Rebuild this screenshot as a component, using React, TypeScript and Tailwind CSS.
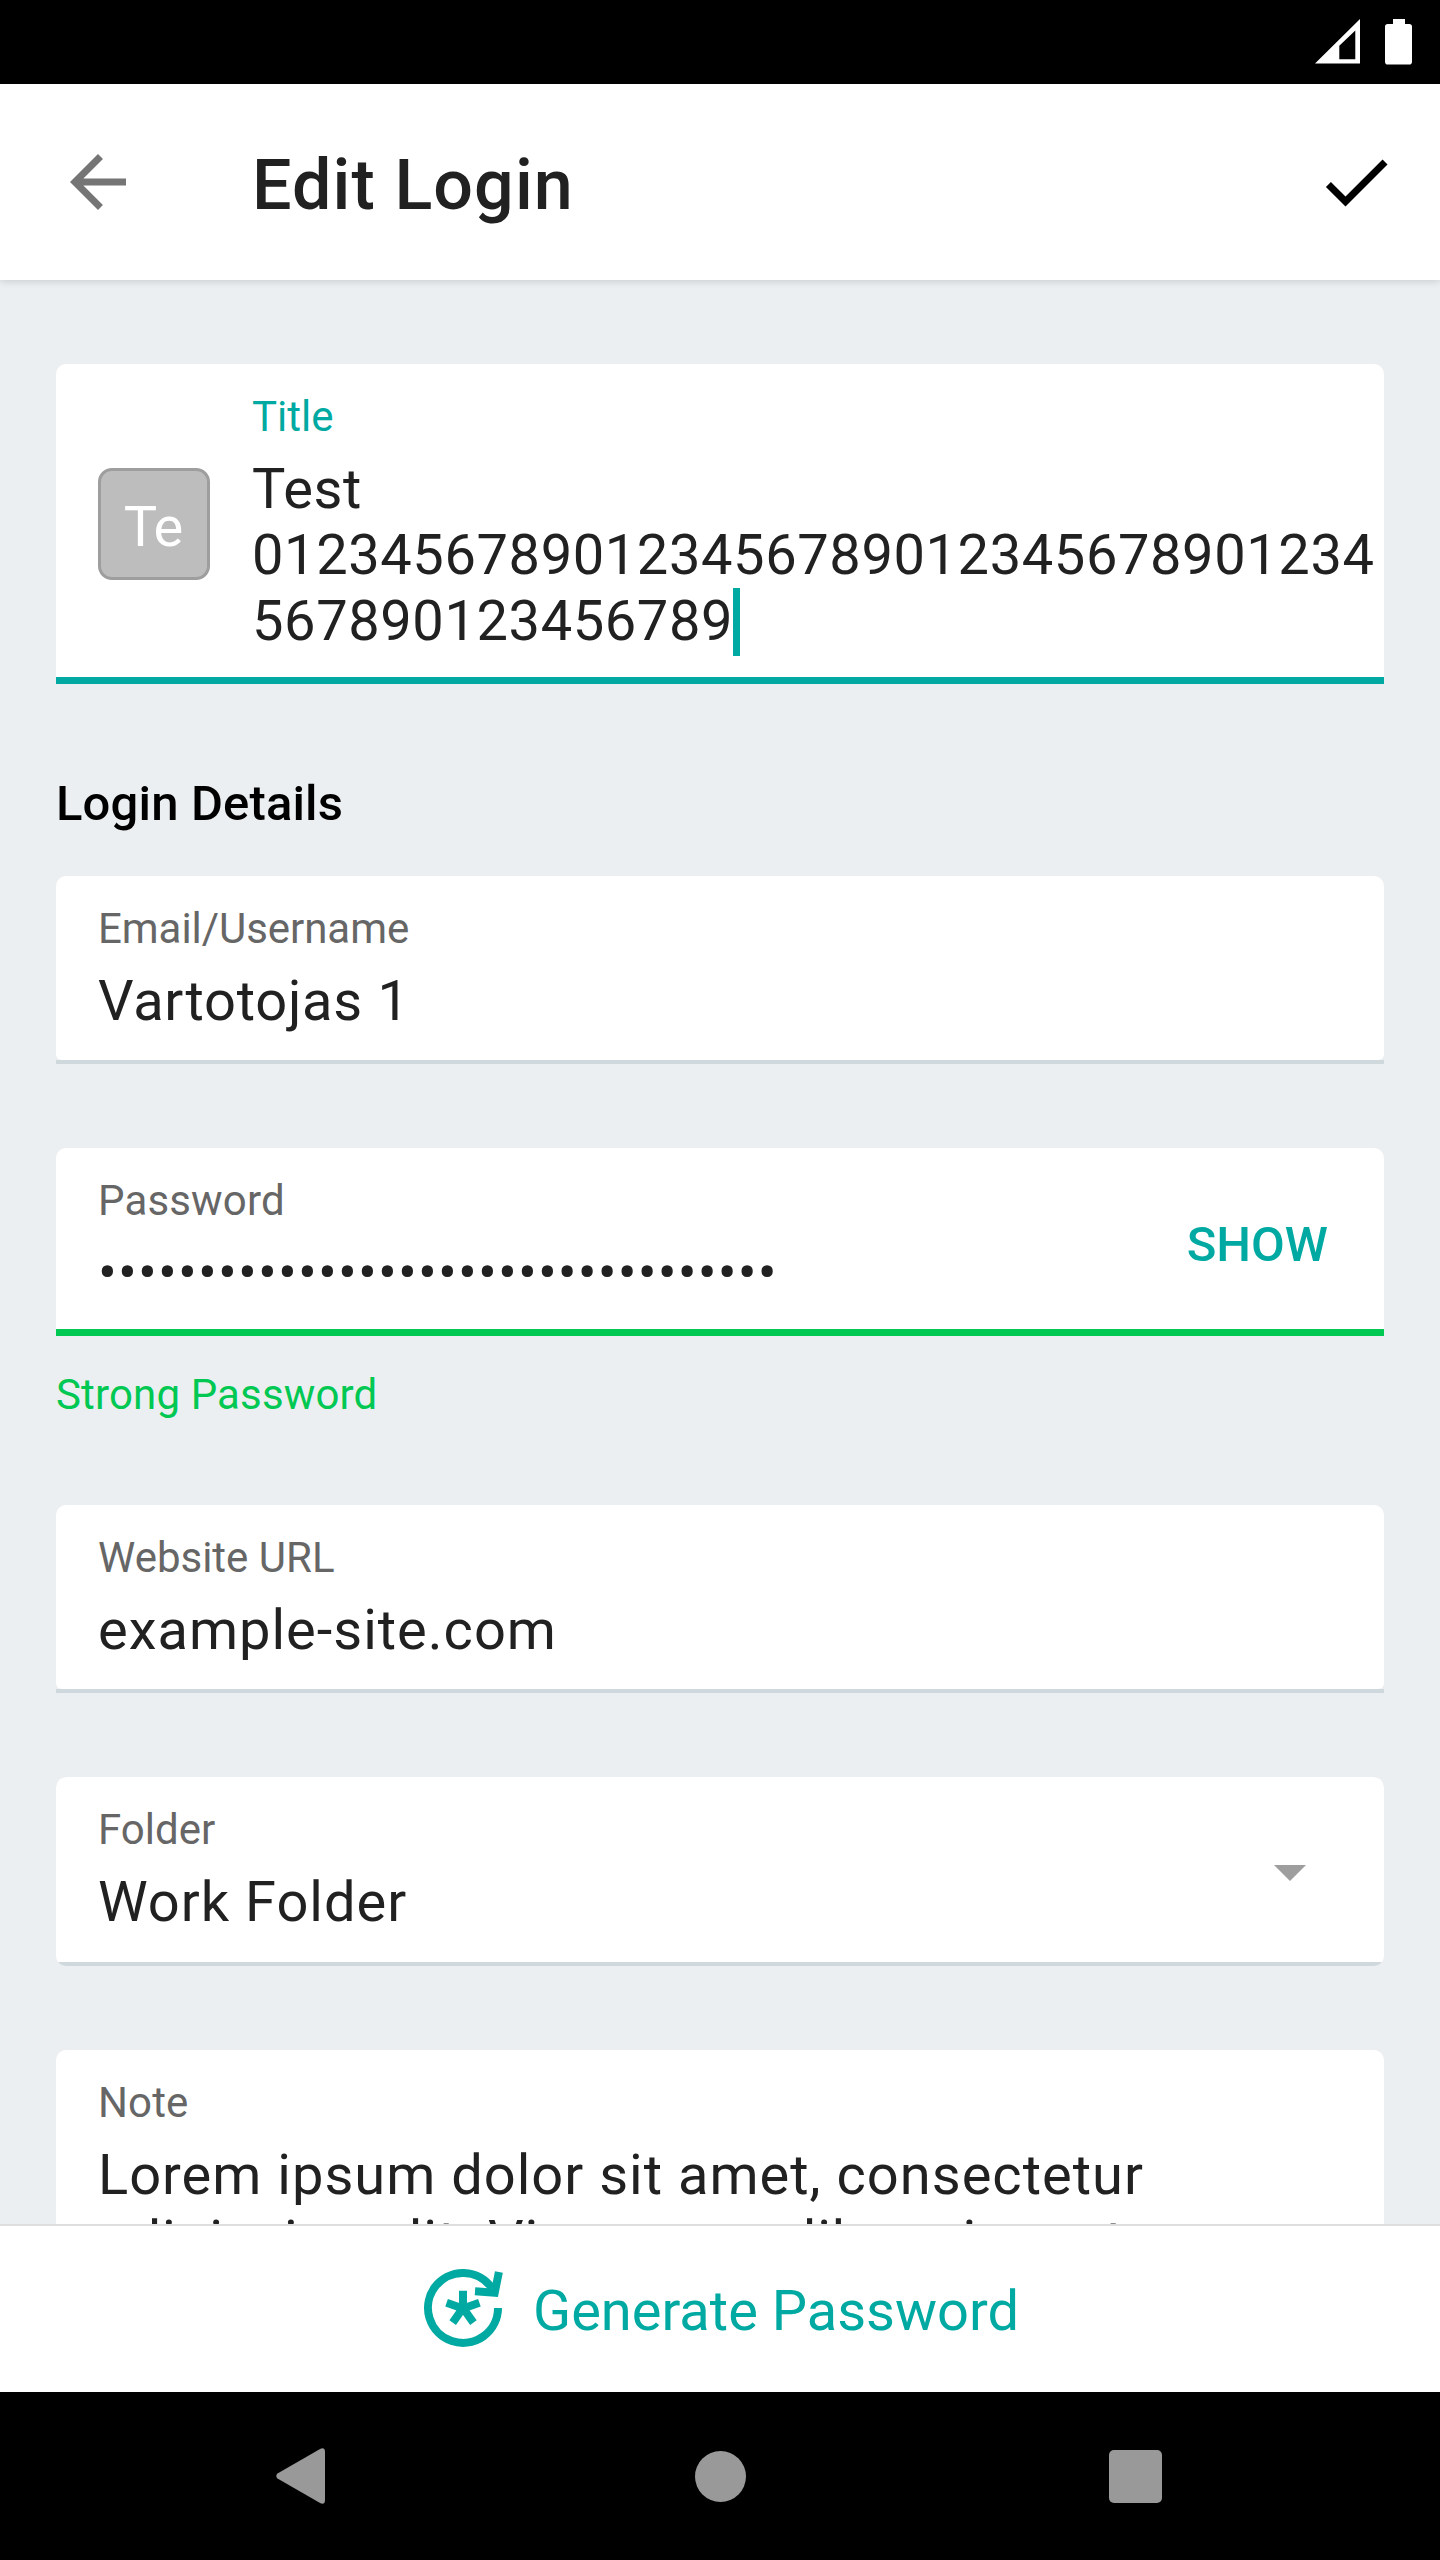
import type { ReactNode } from "react";

function StatusBar() {
  return (
    <div className="flex h-[84px] shrink-0 items-start justify-end gap-[25px] bg-black pt-[19px] pr-7">
      <svg width="45" height="45" viewBox="0 0 45 45" fill="#fff">
        <path fillRule="evenodd" d="M0 44.5 L45 0 V44.5 Z M24.3 40.3 H40.3 V11.5 L24.3 26.7 Z" />
      </svg>
      <svg width="27" height="46" viewBox="0 0 27 46" fill="#fff">
        <path d="M8 0 H20 V5 H24.2 Q27 5 27 7.8 V42.7 Q27 45.5 24.2 45.5 H2.8 Q0 45.5 0 42.7 V7.8 Q0 5 2.8 5 H8 Z" />
      </svg>
    </div>
  );
}

function Header() {
  return (
    <header className="z-10 flex h-[196px] shrink-0 items-center bg-white pr-[42px] pl-14 shadow-[0_1px_8px_rgba(0,0,0,0.16)]">
      <svg width="84" height="84" viewBox="0 0 24 24" fill="#757575">
        <path d="M20 11H7.83l5.59-5.59L12 4l-8 8 8 8 1.41-1.41L7.83 13H20v-2z" />
      </svg>
      <h1 className="ml-28 flex-1 pt-1.5 text-[70px] leading-[82px] font-medium tracking-[1.1px] text-[#212121]">
        Edit Login
      </h1>
      <svg width="84" height="84" viewBox="0 0 24 24" fill="#000">
        <path d="M9 16.17L4.83 12l-1.42 1.41L9 19 21 7l-1.41-1.41L9 16.17z" />
      </svg>
    </header>
  );
}

function Label({ className, children }: { className: string; children: ReactNode }) {
  return <div className={`text-[42px] leading-[49px] whitespace-nowrap ${className}`}>{children}</div>;
}

function Value({ className, children }: { className: string; children: ReactNode }) {
  return (
    <div className={`mt-[15px] text-[56px] leading-[66px] whitespace-nowrap text-[#212121] ${className}`}>
      {children}
    </div>
  );
}

/* White field with a full-width underline beneath it. */
function Field({
  height,
  line,
  bottom = "rounded-b-none",
  children,
}: {
  height: string;
  line: string;
  bottom?: string;
  children: ReactNode;
}) {
  return (
    <div className={`flex shrink-0 flex-col ${height}`}>
      <div className={`flex flex-1 rounded-t-[10px] bg-white pt-7 pl-[42px] ${bottom}`}>{children}</div>
      <div className={`shrink-0 ${line}`} />
    </div>
  );
}

function GenerateIcon() {
  return (
    <svg width="84" height="84" viewBox="0 0 84 84" fill="none" stroke="#00a9a1" strokeWidth="8">
      <path d="M77 41 A35 35 0 1 1 71 21.3" />
      <path d="M54 24.3 L73.7 25.8 L77.9 5" />
      <path d="M42 23.7 V42 M25.6 35.8 L42 41.5 L58.4 35.8 M31.7 55.6 L42 41 L52.4 55.6" />
    </svg>
  );
}

export default function App() {
  return (
    <div className="flex h-[2560px] w-[1440px] flex-col overflow-hidden bg-[#eceff1] font-[Roboto,sans-serif]">
      <StatusBar />
      <Header />

      <main className="flex min-h-0 flex-1 flex-col overflow-hidden px-14 pt-[84px]">
        <Field height="h-[320px]" line="h-[7px] bg-[#00a9a1]">
          <div className="mt-[76px] flex h-28 w-28 items-center justify-center rounded-[14px] border-[3px] border-[#9e9e9e] bg-[#bdbdbd] pt-1.5 pr-0.5 text-[56px] leading-[66px] tracking-[-1px] text-white">
            Te
          </div>
          <div className="ml-[42px]">
            <Label className="text-[#00a9a1]">Title</Label>
            <Value className="tracking-[0.6px]">
              <div>Test</div>
              <div>01234567890123456789012345678901234</div>
              <div className="flex">
                567890123456789
                <span className="h-[68px] w-[7px] bg-[#00a9a1]" />
              </div>
            </Value>
          </div>
        </Field>

        <h2 className="mt-[91px] mb-[43px] shrink-0 text-[49px] leading-[58px] font-medium tracking-[0.15px] text-black">
          Login Details
        </h2>

        <Field height="h-[188px]" line="h-1 bg-[#cfd8dc]" bottom="rounded-b-[6px]">
          <div>
            <Label className="tracking-[-0.05px] text-[#666666]">Email/Username</Label>
            <Value className="tracking-[0.75px]">Vartotojas 1</Value>
          </div>
        </Field>

        <div className="mt-[84px] shrink-0">
          <Field height="h-[188px]" line="h-[7px] bg-[#00c853]">
            <div className="flex-1">
              <Label className="tracking-[0.15px] text-[#666666]">Password</Label>
              <Value className="tracking-[1.1px]">{"•".repeat(34)}</Value>
            </div>
            <button className="mt-10 mr-14 h-[58px] text-[49px] leading-[58px] font-medium text-[#00a9a1]">
              SHOW
            </button>
          </Field>
        </div>
        <div className="mt-[34px] shrink-0 text-[42px] leading-[49px] tracking-[0.15px] text-[#00c853]">
          Strong Password
        </div>

        <div className="mt-[86px] shrink-0">
          <Field height="h-[188px]" line="h-1 bg-[#cfd8dc]" bottom="rounded-b-[6px]">
            <div>
              <Label className="text-[#666666]">Website URL</Label>
              <Value className="tracking-[1px]">example-site.com</Value>
            </div>
          </Field>
        </div>

        <div className="mt-[84px] shrink-0 overflow-hidden rounded-[10px]">
          <Field height="h-[189px]" line="h-1 bg-[#cfd8dc]">
            <div className="flex-1">
              <Label className="text-[#666666]">Folder</Label>
              <Value className="tracking-[1px]">Work Folder</Value>
            </div>
            <svg className="mt-[60px] mr-[78.5px]" width="32" height="16" viewBox="0 0 32 16" fill="#9e9e9e">
              <path d="M0 0 H32 L16 16 Z" />
            </svg>
          </Field>
        </div>

        <div className="mt-[84px] shrink-0">
          <Field height="h-[320px]" line="h-1 bg-[#cfd8dc]">
            <div>
              <Label className="tracking-[0.11px] text-[#666666]">Note</Label>
              <Value className="tracking-[1.01px]">
                Lorem ipsum dolor sit amet, consectetur
                <br />
                adipiscing elit. Vivamus eu libero in erat
              </Value>
            </div>
          </Field>
        </div>
      </main>

      <button className="flex h-[168px] shrink-0 items-center gap-7 border-t-2 border-[#dedede] bg-white pl-[421px]">
        <GenerateIcon />
        <span className="pt-1 text-[56px] leading-[66px] text-[#00a9a1]">Generate Password</span>
      </button>

      <nav className="flex h-[168px] shrink-0 items-center bg-black">
        <svg className="ml-[276px]" width="49" height="56" viewBox="0 0 49 56" fill="#999">
          <path d="M44.5 0.7 Q49 -1 49 4 V52 Q49 57 44.5 55.3 L1.5 30.5 Q-1 28 1.5 25.5 Z" />
        </svg>
        <div className="ml-[369.5px] h-[51px] w-[51px] rounded-full bg-[#999]" />
        <div className="ml-[363px] h-[53px] w-[53px] rounded-[5px] bg-[#999]" />
      </nav>
    </div>
  );
}
